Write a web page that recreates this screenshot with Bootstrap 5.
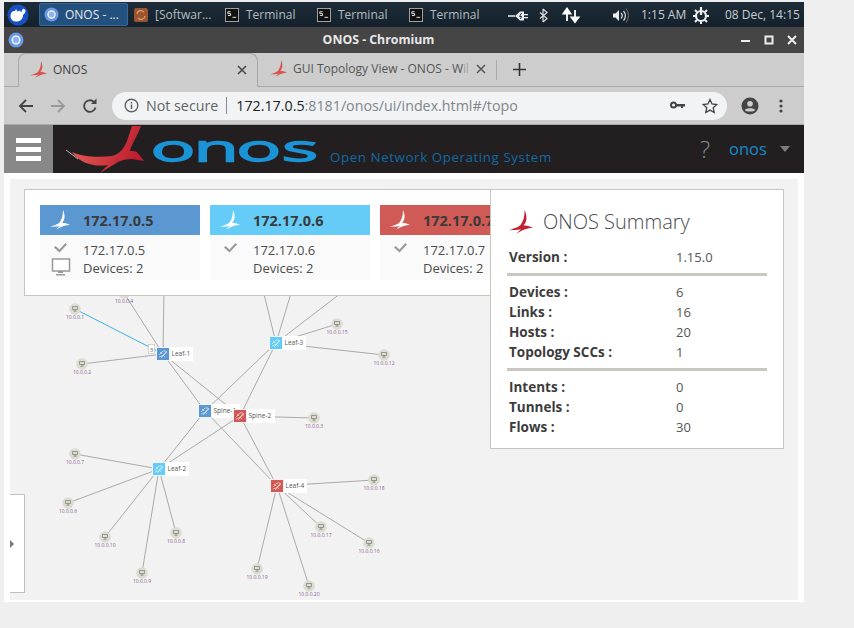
<!DOCTYPE html>
<html lang="en">
<head>
  <meta charset="UTF-8" />
  <meta name="viewport" content="width=device-width, initial-scale=1" />
  <title>ONOS - Chromium</title>
  <link href="https://cdn.jsdelivr.net/npm/bootstrap@5.3.0/dist/css/bootstrap.min.css" rel="stylesheet" />
  <style>
    body { background: #efefef; font-family: "Open Sans", "Noto Sans", sans-serif; overflow: hidden; }
    .desk-window { width: 800px; margin: 2px 0 0 4px; }

    /* desktop panel */
    .task-strip { height: 25px; background: linear-gradient(#1d2c38, #15222c); color: #b4bcc0; font-size: 12px; white-space: nowrap; }
    .task-logo { width: 35px; padding-left: 3px; }
    .task-btn { height: 23px; padding-left: 4px; gap: 7px; }
    .task-btn.on { width: 89px; padding-left: 4px; background: #24507e; border: 1px solid #36689c; border-radius: 2px; color: #e6eaee; gap: 6px; }
    .task-soft { width: 92px; padding-left: 6px; }
    .task-term { width: 92px; padding-left: 5px; }
    .tray { width: 297px; margin-left: 7px; }
    .tray-clock { width: 52px; margin-left: 10px; color: #c8ced2; }
    .tray-date { margin-left: 16px; color: #c8ced2; }

    /* window chrome */
    .title-strip { height: 26px; background: #454545; color: #e8e8e8; font-size: 12.3px; font-weight: 700; }
    .title-name { flex: 1; text-align: center; padding-right: 7px; }
    .title-ctl { gap: 11px; padding-right: 6px; }
    .tab-strip { height: 34px; background: #cdcdcd; border-bottom: 1px solid #a9a9a9; padding-left: 14px; font-size: 12px; color: #3c3c3c; }
    .tab-one { width: 240px; height: 34px; background: #cdcdcd; border: 1px solid #a9a9a9; border-bottom: 0; border-radius: 8px 8px 0 0; padding: 0 10px 2px 11px; }
    .tab-two { width: 238px; padding: 0 10px 2px 12px; color: #555; }
    .tab-text { flex: 1; margin-left: 6px; overflow: hidden; white-space: nowrap; }
    .tab-fade { color: #a0a0a0; }
    .tab-sep { width: 1px; height: 20px; background: #a9a9a9; }
    .tab-add { margin-left: 16px; }
    .tool-strip { height: 38px; background: #cdcdcd; border-bottom: 1px solid #a9a9a9; padding-left: 14px; }
    .tool-btns { gap: 16px; width: 94px; }
    .omni { width: 615px; height: 28px; background: #f1f3f4; border-radius: 14px; padding: 0 9px 0 12px; font-size: 14.25px; color: #80868b; }
    .omni-warn { color: #5f6368; margin-left: 7px; }
    .omni-sep { width: 1px; height: 17px; background: #8a8d90; margin: 0 9px 0 8px; }
    .omni-host { color: #202124; }
    .omni-end { gap: 17px; }
    .tool-end { gap: 20px; margin-left: 14px; }

    /* onos masthead */
    .mast { height: 48px; background: #231f20; }
    .mast-burger { width: 49px; background: #888; gap: 4px; }
    .mast-burger span { display: block; width: 25px; height: 5px; background: #fff; }
    .mast-logo { width: 640px; }
    .mast-help { color: #8b8b8b; font-size: 24px; font-weight: 300; padding-left: 7px; box-sizing: content-box; width: 29px; }
    .mast-user { color: #0f8dd0; font-size: 16.5px; width: 51px; }
    .mast-caret { width: 0; height: 0; border: 5px solid transparent; border-top: 6px solid #7d7d7d; border-bottom: 0; }

    /* topology */
    .topo-frame { background: #fff; padding: 6px 6px 2px; height: 429px; }
    .topo-area { position: relative; width: 788px; height: 421px; background: #f2f2f2; overflow: hidden; }
    .topo-area svg.topo-map { display: block; }
    .inst-panel { position: absolute; left: 14px; top: 10px; width: 470px; height: 107px; background: #fff; border: 1px solid #c6c6be; padding: 15px; overflow: hidden; gap: 10px; }
    .inst-card { flex: 0 0 160px; width: 160px; background: #fafafa; height: 75px; }
    .inst-head { height: 30px; color: #3a3a3a; font-size: 14.5px; font-weight: 700; }
    .inst-head svg { margin: 0 13px 0 10px; }
    .inst-ip { padding-top: 2px; }
    .inst-blue { background: #5b98d2; }
    .inst-sky { background: #65ccf7; }
    .inst-red { background: #d05a55; }
    .inst-body { color: #4c4c4c; font-size: 13px; line-height: 18px; padding-top: 6px; }
    .inst-icons { width: 43px; }
    .sum-panel { position: absolute; left: 480px; top: 10px; width: 294px; height: 260px; background: #fff; border: 1px solid #c6c6be; padding: 17px 16px 0 16px; color: #3c3c3c; font-size: 13px; }
    .sum-title { font-size: 20px; font-weight: 300; color: #4a4a50; height: 30px; gap: 10px; margin-bottom: 10px; padding-left: 2px; }
    .sum-row { height: 20px; line-height: 20px; padding-left: 2px; }
    .sum-key { width: 167px; font-weight: 700; font-size: 13.5px; }
    .sum-val { color: #555; }
    .sum-rule { height: 3px; background: #c8c8c0; margin: 6px 0 6px; }
    .side-tab { position: absolute; left: -6px; top: 315px; width: 21px; height: 99px; background: #fff; border: 1px solid #c0c0b8; border-left: 0; padding-left: 5px; }
    .side-arrow { width: 0; height: 0; border: 5px solid transparent; border-left: 5px solid #777; border-right: 0; }
  </style>
</head>
<body>

<svg width="0" height="0" class="position-absolute">
  <symbol id="bird" viewBox="0 0 24 24">
    <path d="M15.500 0C18.500 6 18 12 14.500 15.500C17.500 15.500 20.500 15.800 24 18C19.500 17.800 14.500 19.500 7.500 23.500C9 21.800 10.500 20.500 12 19.300C8 20.200 4 19.800 0 20.500C5 18 9.500 17.500 11.500 15C14.500 11 15.800 6 15.500 0Z" />
  </symbol>
  <symbol id="chromium" viewBox="0 0 16 16">
    <circle cx="8" cy="8" r="7.500" fill="#6a98e6" />
    <circle cx="8" cy="8" r="3.800" fill="#8db2ee" stroke="#fff" stroke-width="1.300" />
  </symbol>
  <symbol id="term" viewBox="0 0 15 15">
    <rect x=".5" y=".5" width="14" height="14" fill="#111" stroke="#a9a9a9" />
    <path d="M3 4h3M3 6h3M3 4v2M6 6v2M3 8h3M8 10h4" stroke="#eee" fill="none" />
  </symbol>
</svg>

<div class="desk-window">

  <!-- Desktop panel -->
  <div class="task-strip d-flex align-items-center">
    <div class="task-logo">
      <svg width="22" height="22" viewBox="0 0 22 22" class="d-block">
        <circle cx="11" cy="11" r="10.500" fill="#1650c4" />
        <path d="M3.500 12C3.500 8 6 6.500 8 7L9 5L10.500 7.500L13 6.500L14 8.500L16 4.500L18.500 6C18.500 9 17 10 16 11C16 15 13.500 17.500 9.500 17.500C6 17.500 3.500 15.500 3.500 12Z" fill="#fff" />
      </svg>
    </div>
    <div class="task-btn on d-flex align-items-center">
      <svg width="15" height="15"><use href="#chromium" /></svg>
      <span>ONOS - ...</span>
    </div>
    <div class="task-btn task-soft d-flex align-items-center">
      <svg width="14" height="14" viewBox="0 0 14 14">
        <rect width="14" height="14" rx="2" fill="#9b5531" />
        <path d="M3 6a4 4 0 0 1 7-2M11 8a4 4 0 0 1-7 2" stroke="#d5a07c" stroke-width="1.300" fill="none" />
      </svg>
      <span>[Softwar...</span>
    </div>
    <div class="task-btn task-term d-flex align-items-center">
      <svg width="14" height="14"><use href="#term" /></svg>
      <span>Terminal</span>
    </div>
    <div class="task-btn task-term d-flex align-items-center">
      <svg width="14" height="14"><use href="#term" /></svg>
      <span>Terminal</span>
    </div>
    <div class="task-btn task-term d-flex align-items-center">
      <svg width="14" height="14"><use href="#term" /></svg>
      <span>Terminal</span>
    </div>
    <div class="tray d-flex align-items-center">
      <svg width="128" height="20" viewBox="0 0 128 20" class="flex-shrink-0">
        <path d="M5 11h7" stroke="#eee" stroke-width="1.500" />
        <path d="M12 11L17 6.500H21V9H25V10.300H21V12H25V13.300H21V15.500H17Z" fill="#eee" />
        <path d="M18.500 8L16.500 11.500H18.500L17.500 14" stroke="#1b2a35" fill="none" />
        <path d="M40 4L44 7.500L37 13.500M40 17L44 13.500L37 7.500M40 4V17" stroke="#ddd" stroke-width="1.200" fill="none" />
        <path d="M64 16V7M60.500 8.500L64 3.500L67.500 8.500ZM72 5V14M68.500 12.500L72 17L75.500 12.500Z" stroke="#fff" stroke-width="1.800" fill="#fff" />
        <path d="M110 8.500H112.500L116 5V16L112.500 12.500H110Z" fill="#eee" />
        <path d="M118 8a4 4 0 0 1 0 5.500M120.500 6a7 7 0 0 1 0 9.500" stroke="#ddd" stroke-width="1.200" fill="none" />
        <path d="M123 3.500a11 11 0 0 1 0 14" stroke="#777" fill="none" />
      </svg>
      <span class="tray-clock">1:15 AM</span>
      <svg width="16" height="18" viewBox="0 0 16 18" class="flex-shrink-0">
        <circle cx="8" cy="10" r="5" stroke="#eee" stroke-width="2.200" fill="none" />
        <path d="M8 1V9" stroke="#eee" stroke-width="2.200" />
        <path d="M2 4l2 2M14 4l-2 2M0 10h2M14 10h2M2 16l2-2M14 16l-2-2M8 16v2" stroke="#eee" stroke-width="2" />
      </svg>
      <span class="tray-date">08 Dec, 14:15</span>
    </div>
  </div>

  <!-- Window title -->
  <div class="title-strip d-flex align-items-center">
    <svg width="16" height="16" class="ms-1"><use href="#chromium" /></svg>
    <div class="title-name">ONOS - Chromium</div>
    <div class="title-ctl d-flex align-items-center">
      <svg width="12" height="12" viewBox="0 0 12 12"><path d="M1 7h9" stroke="#eee" stroke-width="2" /></svg>
      <svg width="12" height="12" viewBox="0 0 12 12"><rect x="2.500" y="2.500" width="7" height="7" stroke="#eee" stroke-width="2" fill="none" /></svg>
      <svg width="12" height="12" viewBox="0 0 12 12"><path d="M2 2l8 8M10 2l-8 8" stroke="#eee" stroke-width="2" /></svg>
    </div>
  </div>

  <!-- Tabs -->
  <div class="tab-strip d-flex align-items-start">
    <div class="tab-one d-flex align-items-center">
      <svg width="17" height="17" fill="#d9534a"><use href="#bird" /></svg>
      <span class="tab-text">ONOS</span>
      <svg width="10" height="10" viewBox="0 0 10 10"><path d="M1 1l8 8M9 1l-8 8" stroke="#444" stroke-width="1.500" /></svg>
    </div>
    <div class="tab-two d-flex align-items-center h-100">
      <svg width="17" height="17" fill="#d9534a"><use href="#bird" /></svg>
      <span class="tab-text">GUI Topology View - ONOS - W<span class="tab-fade">il</span></span>
      <svg width="10" height="10" viewBox="0 0 10 10" class="ms-2"><path d="M1 1l8 8M9 1l-8 8" stroke="#555" stroke-width="1.500" /></svg>
    </div>
    <div class="d-flex align-items-center h-100">
      <div class="tab-sep"></div>
      <svg width="13" height="13" viewBox="0 0 13 13" class="tab-add"><path d="M6.500 0v13M0 6.500h13" stroke="#333" stroke-width="1.600" /></svg>
    </div>
  </div>

  <!-- Address bar -->
  <div class="tool-strip d-flex align-items-center">
    <div class="tool-btns d-flex align-items-center">
      <svg width="16" height="16" viewBox="0 0 16 16"><path d="M15 8H2M8 2L2 8l6 6" stroke="#444" stroke-width="1.800" fill="none" /></svg>
      <svg width="16" height="16" viewBox="0 0 16 16"><path d="M1 8h13M8 2l6 6-6 6" stroke="#999" stroke-width="1.800" fill="none" /></svg>
      <svg width="16" height="16" viewBox="0 0 16 16"><path d="M13.500 9.500A5.800 5.800 0 1 1 12 4" stroke="#444" stroke-width="1.800" fill="none" /><path d="M9 6h5.500V.5Z" fill="#444" /></svg>
    </div>
    <div class="omni d-flex align-items-center">
      <svg width="15" height="15" viewBox="0 0 15 15" class="flex-shrink-0">
        <circle cx="7.500" cy="7.500" r="6.300" stroke="#5f6368" stroke-width="1.400" fill="none" />
        <path d="M7.500 6.500V11M7.500 4V5.400" stroke="#5f6368" stroke-width="1.500" />
      </svg>
      <span class="omni-warn">Not secure</span>
      <span class="omni-sep"></span>
      <span class="flex-grow-1"><span class="omni-host">172.17.0.5</span>:8181/onos/ui/index.html#/topo</span>
      <div class="omni-end d-flex align-items-center">
        <svg width="15" height="9" viewBox="0 0 15 9"><circle cx="3.500" cy="4" r="2.500" stroke="#444" stroke-width="2" fill="none" /><path d="M6 3h9v2.500h-2V7h-2V5.500H6Z" fill="#444" /></svg>
        <svg width="16" height="16" viewBox="0 0 16 16"><path d="M8 1.500l2 4.500 4.800.5-3.600 3.200 1 4.800L8 12.100 3.800 14.500l1-4.800L1.200 6.500 6 6Z" stroke="#444" stroke-width="1.300" fill="none" /></svg>
      </div>
    </div>
    <div class="tool-end d-flex align-items-center">
      <svg width="18" height="18" viewBox="0 0 18 18">
        <circle cx="9" cy="9" r="8.500" fill="#444" />
        <circle cx="9" cy="6.800" r="2.800" fill="#cdcdcd" />
        <path d="M3.800 13C5 10.800 13 10.800 14.200 13C13 15 5 15 3.800 13Z" fill="#cdcdcd" />
      </svg>
      <svg width="4" height="14" viewBox="0 0 4 14" fill="#444"><circle cx="2" cy="2" r="1.600" /><circle cx="2" cy="7" r="1.600" /><circle cx="2" cy="12" r="1.600" /></svg>
    </div>
  </div>

  <!-- ONOS masthead -->
  <div class="mast d-flex">
    <div class="mast-burger d-flex flex-column align-items-center justify-content-center"><span></span><span></span><span></span></div>
    <div class="mast-logo">
      <svg width="640" height="48" viewBox="53 125 640 48" class="d-block">
        <defs>
          <linearGradient id="birdFill" x1="0" y1="0" x2="1" y2="0.300">
            <stop offset="0" stop-color="#e8675b" />
            <stop offset="1" stop-color="#bf1e2e" />
          </linearGradient>
        </defs>
        <path d="M66 150L78 159" stroke="#bbb" stroke-width="1" />
        <path d="M72 152C80 156 95 158 112 156C120 154 124 148 127 141L132 126H141C138 135 132 143 130 151C133 151 135 151 137 152L144 161L132 159C127 159 122 160 118 162L100 173L108 165C95 167 80 164 72 152Z" fill="url(#birdFill)" />
        <text x="72.200 92.600 113 134.800" y="161.500" transform="scale(2.100 1)" font-family="'Open Sans', sans-serif" font-size="35" font-weight="300" fill="#1a94d6" stroke="#1a94d6" stroke-width="3.800" style="vector-effect: non-scaling-stroke">onos</text>
        <text x="330" y="162" font-family="'Open Sans', sans-serif" font-size="13.400" letter-spacing=".55" fill="#0f6aa6">Open Network Operating System</text>
      </svg>
    </div>
    <div class="flex-grow-1 d-flex align-items-center">
      <span class="mast-help">?</span>
      <span class="mast-user">onos</span>
      <span class="mast-caret"></span>
    </div>
  </div>

  <!-- Topology view -->
  <div class="topo-frame">
    <div class="topo-area">
      <svg class="topo-map" id="topoMap" width="788" height="421" viewBox="10 179 788 421"></svg>

      <div class="side-tab d-flex align-items-center"><span class="side-arrow"></span></div>

      <div class="inst-panel d-flex" id="instPanel"></div>

      <div class="sum-panel">
        <div class="sum-title d-flex align-items-center">
          <svg width="24" height="24" fill="#c1202f" class="flex-shrink-0"><use href="#bird" /></svg>
          <span>ONOS Summary</span>
        </div>
        <div id="sumRows"></div>
      </div>
    </div>
  </div>
</div>

<script>
  // instance cards
  const insts = [
    { ip: '172.17.0.5', cls: 'inst-blue', ui: true },
    { ip: '172.17.0.6', cls: 'inst-sky' },
    { ip: '172.17.0.7', cls: 'inst-red' }
  ];
  document.getElementById('instPanel').innerHTML = insts.map(i => `
    <div class="inst-card">
      <div class="inst-head d-flex align-items-center ${i.cls}">
        <svg width="20" height="20" fill="#fff" class="flex-shrink-0"><use href="#bird" /></svg><span class="inst-ip">${i.ip}</span>
      </div>
      <div class="inst-body d-flex">
        <div class="inst-icons">
          <svg width="43" height="40" viewBox="0 0 43 40" class="d-block">
            <path d="M15.500 5l4 3.500 6-6.500 1.500 1.500-7.500 8-5.500-5Z" fill="#999" />
            ${i.ui ? '<rect x="12.500" y="18" width="17" height="12" fill="#fff" stroke="#999" stroke-width="1.500" /><path d="M18 30v2h5v-2ZM16 33h9v1.500h-9Z" fill="#999" />' : ''}
          </svg>
        </div>
        <div>${i.ip}<br />Devices: 2</div>
      </div>
    </div>`).join('');

  // summary table
  const groups = [
    [['Version :', '1.15.0']],
    [['Devices :', '6'], ['Links :', '16'], ['Hosts :', '20'], ['Topology SCCs :', '1']],
    [['Intents :', '0'], ['Tunnels :', '0'], ['Flows :', '30']]
  ];
  document.getElementById('sumRows').innerHTML = groups.map(g =>
    g.map(r => `<div class="sum-row d-flex"><span class="sum-key">${r[0]}</span><span class="sum-val">${r[1]}</span></div>`).join('')
  ).join('<div class="sum-rule"></div>');

  // topology drawing, page coordinates
  const sw = {
    leaf1: [163, 354, 'Leaf-1', '#5b98d2'],
    spine1: [205, 411, 'Spine-1', '#5b98d2'],
    spine2: [240, 416, 'Spine-2', '#d05a55'],
    leaf3: [276, 343, 'Leaf-3', '#65ccf7'],
    leaf2: [159, 469, 'Leaf-2', '#65ccf7'],
    leaf4: [277, 486, 'Leaf-4', '#d05a55']
  };
  const hosts = [
    [75, 309, '10.0.0.1', 'leaf1'],
    [82, 364, '10.0.0.2', 'leaf1'],
    [124, 293, '10.0.0.4', 'leaf1'],
    [337, 324, '10.0.0.15', 'leaf3'],
    [384, 355, '10.0.0.12', 'leaf3'],
    [314, 418, '10.0.0.3', 'spine2'],
    [75, 454, '10.0.0.7', 'leaf2'],
    [68, 503, '10.0.0.6', 'leaf2'],
    [105, 537, '10.0.0.10', 'leaf2'],
    [176, 533, '10.0.0.8', 'leaf2'],
    [142, 573, '10.0.0.9', 'leaf2'],
    [374, 480, '10.0.0.18', 'leaf4'],
    [321, 527, '10.0.0.17', 'leaf4'],
    [369, 543, '10.0.0.16', 'leaf4'],
    [257, 569, '10.0.0.19', 'leaf4'],
    [309, 586, '10.0.0.20', 'leaf4']
  ];
  const trunks = [['leaf1', 'spine1'], ['leaf1', 'spine2'], ['leaf3', 'spine1'], ['leaf3', 'spine2'],
    ['leaf2', 'spine1'], ['leaf2', 'spine2'], ['leaf4', 'spine1'], ['leaf4', 'spine2']];
  const stubs = [[164, 290, 'leaf1'], [263, 290, 'leaf3'], [292, 290, 'leaf3'], [345, 290, 'leaf3']];

  const line = (x1, y1, x2, y2, c = '#aaa') => `<line x1="${x1}" y1="${y1}" x2="${x2}" y2="${y2}" stroke="${c}" stroke-width="1" />`;
  let out = '';
  trunks.forEach(t => { out += line(sw[t[0]][0], sw[t[0]][1], sw[t[1]][0], sw[t[1]][1]); });
  stubs.forEach(s => { out += line(s[0], s[1], sw[s[2]][0], sw[s[2]][1]); });
  hosts.forEach(h => {
    if (h[2] !== '10.0.0.1') out += line(h[0], h[1], sw[h[3]][0], sw[h[3]][1]);
  });
  out += line(75, 309, 163, 354, '#3cb4e6');
  out += '<rect x="148.500" y="344.500" width="6" height="9" fill="#fff" stroke="#bbb" stroke-width=".6" /><text x="151.500" y="351.500" text-anchor="middle" font-size="6" fill="#666">3</text>';

  hosts.forEach(h => {
    out += `<circle cx="${h[0]}" cy="${h[1]}" r="5.800" fill="#dcdcd0" />`;
    out += `<path d="M${h[0] - 2.5} ${h[1] - 2.5}h5v3h-5ZM${h[0]} ${h[1] + .5}v1.500M${h[0] - 1.5} ${h[1] + 2.200}h3" fill="none" stroke="#777" stroke-width=".7" />`;
    out += `<text x="${h[0]}" y="${h[1] + 9.500}" text-anchor="middle" font-family="'Open Sans', sans-serif" font-size="5" fill="#8c5c94">${h[2]}</text>`;
  });
  Object.values(sw).forEach(s => {
    const [x, y, name, col] = s;
    const tw = name.length > 6 ? 27 : 22;
    out += `<rect x="${x + 6}" y="${y - 7}" width="${tw + 2}" height="14" fill="#fff" />`;
    out += `<rect x="${x - 6.5}" y="${y - 6.5}" width="13" height="13" fill="${col}" stroke="#fff" stroke-width=".8" />`;
    // tangled strands of the switch glyph
    out += `<path d="M${x - 4} ${y + 1}l4 -4h3M${x - 4} ${y + 3}l3 -1 5 -5M${x - 2} ${y + 4}l6 -6M${x - 3} ${y - 2}l2 2M${x} ${y + 1}l2 2" stroke="#fff" stroke-width=".8" fill="none" opacity=".7" />`;
    out += `<text x="${x + 8.500}" y="${y + 2.200}" font-family="'Open Sans', sans-serif" font-size="6.500" fill="#555">${name}</text>`;
  });
  document.getElementById('topoMap').innerHTML = out;
</script>

<script src="https://cdn.jsdelivr.net/npm/bootstrap@5.3.0/dist/js/bootstrap.bundle.min.js"></script>
</body>
</html>
